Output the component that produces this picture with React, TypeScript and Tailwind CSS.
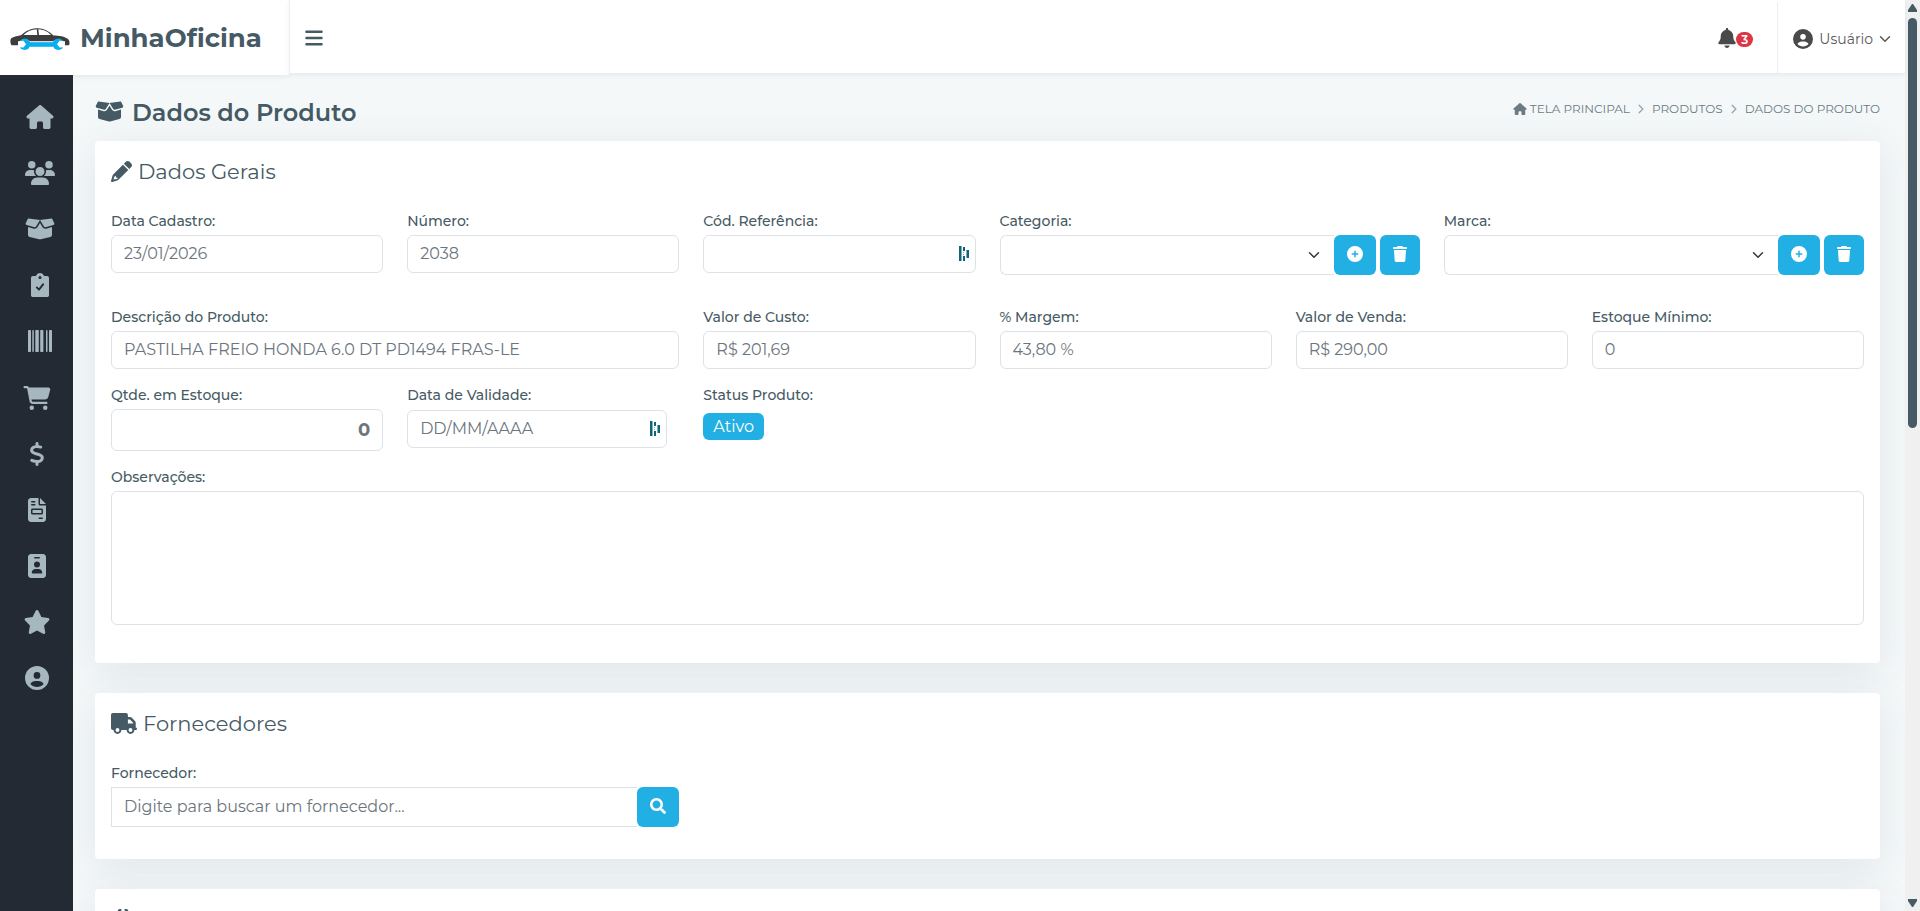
import type { ReactNode } from 'react';
import type { IconType } from 'react-icons';
import { FaSearch } from 'react-icons/fa';
import {
  FaBars,
  FaBell,
  FaBoxOpen,
  FaBoxesStacked,
  FaCartShopping,
  FaCirclePlus,
  FaCircleUser,
  FaDollarSign,
  FaFileInvoice,
  FaHouse,
  FaIdBadge,
  FaStar,
  FaTrash,
  FaTruck,
  FaUsers,
} from 'react-icons/fa6';

type Icon = IconType | ((props: { className?: string }) => ReactNode);

// Clipboard with a small tick
function ClipboardTick({ className }: { className?: string }) {
  return (
    <svg className={className} viewBox="0 0 384 512" aria-hidden="true">
      <path
        fillRule="evenodd"
        fill="currentColor"
        d="M40 64h66C119 26 153 0 192 0s73 26 86 64h66c22 0 40 18 40 40v368c0 22-18 40-40 40H40c-22 0-40-18-40-40V104c0-22 18-40 40-40zm152-2a32 32 0 1 0 0 64 32 32 0 1 0 0-64z"
      />
      <path d="M124 308l46 46 88-112" fill="none" stroke="#242a33" strokeWidth="40" strokeLinecap="round" strokeLinejoin="round" />
    </svg>
  );
}

function Barcode({ className }: { className?: string }) {
  return (
    <svg className={className} viewBox="0 0 24 24" fill="currentColor" aria-hidden="true">
      <rect x="0" y="1" width="3" height="22" rx="0.7" />
      <rect x="4.300" y="1" width="1.500" height="22" rx="0.7" />
      <rect x="7.300" y="1" width="3.500" height="22" rx="0.7" />
      <rect x="12.200" y="1" width="3.200" height="22" rx="0.7" />
      <rect x="18" y="1" width="1.500" height="22" rx="0.7" />
      <rect x="21" y="1" width="3" height="22" rx="0.7" />
    </svg>
  );
}

function Pencil({ className }: { className?: string }) {
  return (
    <svg className={className} viewBox="0 0 512 512" fill="currentColor" aria-hidden="true">
      <path d="M362.700 19.300L314.300 67.700 444.300 197.700l48.400-48.400c25-25 25-65.500 0-90.500L453.300 19.300c-25-25-65.500-25-90.500 0z" />
      <path d="M291.700 90.300L58.600 323.500c-10.400 10.400-18 23.300-22.200 37.400L1 481.200C-1.500 489.700.8 498.800 7 505s15.300 8.500 23.700 6.100l120.300-35.400c14.100-4.200 27-11.800 37.400-22.200L421.700 220.300zM98 372l22-10v30c0 8.800 7.200 16 16 16h30l-10 22c-4 3-9 5-13 6.500L59 452l23-66c3-5 8-10 16-14z" />
    </svg>
  );
}

const registerLinks: { label: string; icon: Icon }[] = [
  { label: 'Tela Principal', icon: FaHouse },
  { label: 'Clientes', icon: FaUsers },
  { label: 'Produtos', icon: FaBoxOpen },
  { label: 'Ordens de Serviço', icon: ClipboardTick },
  { label: 'Código de Barras', icon: Barcode },
];

const managementLinks: { label: string; icon: Icon }[] = [
  { label: 'Vendas', icon: FaCartShopping },
  { label: 'Financeiro', icon: FaDollarSign },
  { label: 'Notas', icon: FaFileInvoice },
  { label: 'Funcionários', icon: FaIdBadge },
  { label: 'Avaliações', icon: FaStar },
  { label: 'Minha Conta', icon: FaCircleUser },
];

const inputClass =
  'block h-[38px] w-full rounded-md border border-[#dee2e6] bg-white px-3 pb-0.5 text-base text-[#6c757d] placeholder:text-[#6c757d] outline-none focus:border-[#22afe4]';

// Car body with a wrench running between the wheels
function Logo() {
  return (
    <svg className="h-[24px] w-[60px] shrink-0" viewBox="0 0 60 24" aria-hidden="true">
      <path
        d="M1 17.500C.2 15.500 0 12.500 1.500 11C4.500 9.300 8 9 11 8.200C16 4 21 1.300 27.500 1.300C34 1.300 39 4.500 43.500 8.400C49 8.500 55 9.300 58 12C59.600 13.500 60 16.500 59 18.300H54.500C54.300 14.500 51.500 12.300 48.500 12.300C45.800 12.300 43.500 13.600 42.500 15H20.500C19 12.900 17 12 14.700 12C11.500 12 9 14.500 8.800 18.300H3.500C2.300 18.300 1.300 18.200 1 17.500Z"
        fill="#3d3d3d"
      />
      <path d="M13.500 8C17.500 4.200 21.500 2.500 26.700 2.300L27.300 8Z" fill="#fff" />
      <path d="M28.300 2.300C33.500 2.400 37.500 4.500 41 8H29Z" fill="#fff" />
      <path d="M19.500 14.200H43.500V20H19.500Z" fill="#fff" />
      <path d="M19.500 15.200H43.500V19.800H19.500Z" fill="#0aaef0" />
      <circle cx="14.700" cy="17.200" r="5.700" fill="#0aaef0" />
      <circle cx="48.300" cy="17.200" r="5.700" fill="#0aaef0" />
      <path d="M8 14.200L13.500 13.800L16 17.200L13.500 20.500L8 20.200Z" fill="#fff" />
      <path d="M55 14.200L49.500 13.800L47 17.200L49.500 20.500L55 20.200Z" fill="#fff" />
    </svg>
  );
}

function Chevron({ className }: { className: string }) {
  return (
    <svg className={className} viewBox="0 0 16 16" fill="none" aria-hidden="true">
      <path d="M2 5l6 6 6-6" stroke="currentColor" strokeWidth="2" strokeLinecap="round" strokeLinejoin="round" />
    </svg>
  );
}

// Password manager mark shown inside text boxes
function AutofillMark() {
  return (
    <svg className="absolute top-[11px] right-1.5 h-4 w-3" viewBox="0 0 12 16" fill="#0e6577" aria-hidden="true">
      <path d="M1 0h2.500v15H1zM5 1h2v4H5zM5 10h2v5H5zM8.500 4h2.500v8H8.500z" />
      <path d="M5 6h1v1H5zM5 8h1v1H5z" opacity=".5" />
    </svg>
  );
}

function NavList({ links, className }: { links: typeof registerLinks; className?: string }) {
  return (
    <ul className={className}>
      {links.map(({ label, icon: Icon }) => (
        <li key={label}>
          <a href="#" aria-label={label} className="flex h-14 items-center justify-center text-[#a6b7bf] hover:text-white">
            <Icon className="h-6 w-8" />
          </a>
        </li>
      ))}
    </ul>
  );
}

function Field({ id, label, className, children }: { id: string; label: string; className: string; children: ReactNode }) {
  return (
    <div className={className}>
      <label htmlFor={id} className="mb-1 block text-sm/5 font-medium text-[#455a64]">
        {label}
      </label>
      {children}
    </div>
  );
}

function Card({ icon, title, className, children }: { icon: ReactNode; title?: string; className: string; children?: ReactNode }) {
  return (
    <section className={`rounded-sm bg-white px-4 pt-4 shadow-[0_8px_40px_rgba(71,85,99,0.11)] ${className}`}>
      <h2 className="mb-[26px] flex h-7 items-center gap-1.5 text-[21px]/7 text-[#455a64]">
        {icon}
        {title && <span className="pt-0.5">{title}</span>}
      </h2>
      {children}
    </section>
  );
}

function SelectWithActions({ id, name }: { id: string; name: string }) {
  return (
    <div className="flex">
      <div className="relative flex-1">
        <select id={id} className="h-10 w-full appearance-none rounded-l-md border border-r-0 border-[#dee2e6] bg-white px-3 text-base text-[#6c757d] outline-none">
          <option value=""></option>
        </select>
        <Chevron className="pointer-events-none absolute top-1/2 right-3.5 size-3 -translate-y-1/2 text-[#343a40]" />
      </div>
      <button type="button" aria-label={`Adicionar ${name}`} className="flex h-10 w-[42px] items-center justify-center rounded-md bg-[#22afe4] pb-0.5 text-white">
        <FaCirclePlus className="size-4" />
      </button>
      <button type="button" aria-label={`Excluir ${name}`} className="ml-1 flex h-10 w-10 items-center justify-center rounded-md bg-[#22afe4] pb-0.5 text-white">
        <FaTrash className="size-4" />
      </button>
    </div>
  );
}

function Header() {
  return (
    <header className="relative z-10 flex">
      <a href="#" className="flex h-[75px] w-[289px] shrink-0 items-center gap-2.5 bg-white pt-0.5 pl-2.5 text-[26px] font-bold text-[#455a64] shadow-[0_2px_5px_rgba(69,90,100,0.09)]">
        <Logo />
        MinhaOficina
      </a>
      <div className="flex h-[73px] flex-1 items-center border-l border-[#eceff1] bg-white pt-0.5 shadow-[0_2px_5px_rgba(69,90,100,0.09)]">
        <button type="button" aria-label="Menu" className="px-3.5 text-[#455a64]">
          <FaBars className="size-5" />
        </button>
        <button type="button" aria-label="Notificações" className="ml-auto flex items-center px-6 text-[#4a4a4a]">
          <FaBell className="h-5 w-[18px]" />
          <span className="mt-1 flex h-[15px] w-[17px] items-center justify-center rounded-full bg-[#dc3545] text-xs font-semibold text-white">3</span>
        </button>
        <button type="button" className="flex h-full items-center gap-1.5 border-l border-[#eceff1] pt-0.5 pr-3.5 pl-[15px] text-sm text-[#5a5a5a]">
          <FaCircleUser className="size-5 text-[#4a4a4a]" />
          Usuário
          <Chevron className="size-3" />
        </button>
      </div>
    </header>
  );
}

function Breadcrumb() {
  return (
    <nav aria-label="Localização" className="flex items-center gap-1.5 pt-0.5 text-xs/4 text-[#6c7a82] uppercase">
      <a href="#" className="flex items-center gap-[3px]">
        <FaHouse className="h-3 w-3.5" />
        Tela Principal
      </a>
      <Chevron className="size-2.5 -rotate-90 text-[#93a4ac]" />
      <a href="#">Produtos</a>
      <Chevron className="size-2.5 -rotate-90 text-[#93a4ac]" />
      <span>Dados do Produto</span>
    </nav>
  );
}

function ScrollBar() {
  return (
    <div className="flex w-[15px] shrink-0 flex-col items-center bg-[#f0f0f0] pt-1 pb-1" aria-hidden="true">
      <svg className="mb-1.5 h-2 w-[9px]" viewBox="0 0 9 8" fill="#455a64">
        <path d="M4 0h1l4 6v2H0V6z" />
      </svg>
      <div className="h-[410px] w-[9px] rounded-full bg-[#455a64]" />
      <svg className="mt-auto h-2 w-[9px]" viewBox="0 0 9 8" fill="#455a64">
        <path d="M0 0h9v2L5 8H4L0 2z" />
      </svg>
    </div>
  );
}

export default function App() {
  return (
    <div className="flex h-screen overflow-hidden bg-[#f4f8f9] font-['Montserrat','Inter',sans-serif]">
      <div className="flex min-w-0 flex-1 flex-col">
        <Header />
        <div className="flex min-h-0 flex-1">
          <aside className="w-[73px] shrink-0 bg-[#242a33] pt-3.5">
            <nav aria-label="Principal">
              <NavList links={registerLinks} className="pl-1.5" />
              <NavList links={managementLinks} className="pt-px" />
            </nav>
          </aside>

          <main className="min-w-0 flex-1 overflow-hidden pr-[25px] pl-[22px]">
            <div className="flex h-[66px] items-center justify-between">
              <h1 className="flex items-center gap-2 pt-2.5 text-2xl font-semibold text-[#455a64]">
                <FaBoxOpen className="mb-1 h-[23px] w-[29px]" />
                Dados do Produto
              </h1>
              <Breadcrumb />
            </div>

            <form className="flex flex-col gap-[30px]">
              <Card icon={<Pencil className="size-[21px]" />} title="Dados Gerais" className="pb-[38px]">
                <div className="grid grid-cols-12 gap-x-6">
                  <Field id="data-cadastro" label="Data Cadastro:" className="col-span-2 mb-8">
                    <input id="data-cadastro" className={inputClass} defaultValue="23/01/2026" />
                  </Field>
                  <Field id="numero" label="Número:" className="col-span-2">
                    <input id="numero" className={inputClass} defaultValue="2038" />
                  </Field>
                  <Field id="referencia" label="Cód. Referência:" className="col-span-2">
                    <div className="relative">
                      <input id="referencia" className={inputClass} />
                      <AutofillMark />
                    </div>
                  </Field>
                  <Field id="categoria" label="Categoria:" className="col-span-3 mb-8">
                    <SelectWithActions id="categoria" name="categoria" />
                  </Field>
                  <Field id="marca" label="Marca:" className="col-span-3">
                    <SelectWithActions id="marca" name="marca" />
                  </Field>

                  <Field id="descricao" label="Descrição do Produto:" className="col-span-4 mb-4">
                    <input id="descricao" className={inputClass} defaultValue="PASTILHA FREIO HONDA 6.0 DT PD1494 FRAS-LE" />
                  </Field>
                  <Field id="custo" label="Valor de Custo:" className="col-span-2">
                    <input id="custo" className={inputClass} defaultValue="R$ 201,69" />
                  </Field>
                  <Field id="margem" label="% Margem:" className="col-span-2">
                    <input id="margem" className={inputClass} defaultValue="43,80 %" />
                  </Field>
                  <Field id="venda" label="Valor de Venda:" className="col-span-2">
                    <input id="venda" className={inputClass} defaultValue="R$ 290,00" />
                  </Field>
                  <Field id="minimo" label="Estoque Mínimo:" className="col-span-2">
                    <input id="minimo" className={inputClass} defaultValue="0" />
                  </Field>

                  <Field id="estoque" label="Qtde. em Estoque:" className="col-span-2 mb-4">
                    <input
                      id="estoque"
                      className="block h-[42px] w-full rounded-md border border-[#dee2e6] px-3 text-right text-lg font-bold text-[#6c757d] outline-none"
                      defaultValue="0"
                    />
                  </Field>
                  <Field id="validade" label="Data de Validade:" className="col-span-2">
                    <div className="relative mt-[5px] mr-3">
                      <input id="validade" className={inputClass} placeholder="DD/MM/AAAA" />
                      <AutofillMark />
                    </div>
                  </Field>
                  <div className="col-span-8">
                    <p className="mb-2 text-sm/5 font-medium text-[#455a64]">Status Produto:</p>
                    <span className="inline-flex h-[27px] items-center rounded-md bg-[#22afe4] px-2.5 text-base text-white">Ativo</span>
                  </div>

                  <Field id="observacoes" label="Observações:" className="col-span-12">
                    <textarea
                      id="observacoes"
                      className="block h-[134px] w-full resize-none rounded-md border border-[#dee2e6] px-3 py-1.5 text-base text-[#6c757d] outline-none"
                    />
                  </Field>
                </div>
              </Card>

              <Card icon={<FaTruck className="h-[21px] w-[26px]" />} title="Fornecedores" className="pb-8">
                <div className="grid grid-cols-12 gap-x-6">
                  <Field id="fornecedor" label="Fornecedor:" className="col-span-4">
                    <div className="flex">
                      <input
                        id="fornecedor"
                        className="h-10 min-w-0 flex-1 border border-r-0 border-[#dee2e6] px-3 pb-0.5 text-base text-[#6c757d] outline-none placeholder:text-[#6c757d]"
                        placeholder="Digite para buscar um fornecedor..."
                      />
                      <button type="button" aria-label="Buscar fornecedor" className="flex h-10 w-[42px] items-center justify-center rounded-md bg-[#22afe4] pb-0.5 text-white">
                        <FaSearch className="size-4" />
                      </button>
                    </div>
                  </Field>
                </div>
              </Card>

              <Card icon={<FaBoxesStacked className="h-[21px] w-6" />} className="pb-8" />
            </form>
          </main>
        </div>
      </div>
      <ScrollBar />
    </div>
  );
}
